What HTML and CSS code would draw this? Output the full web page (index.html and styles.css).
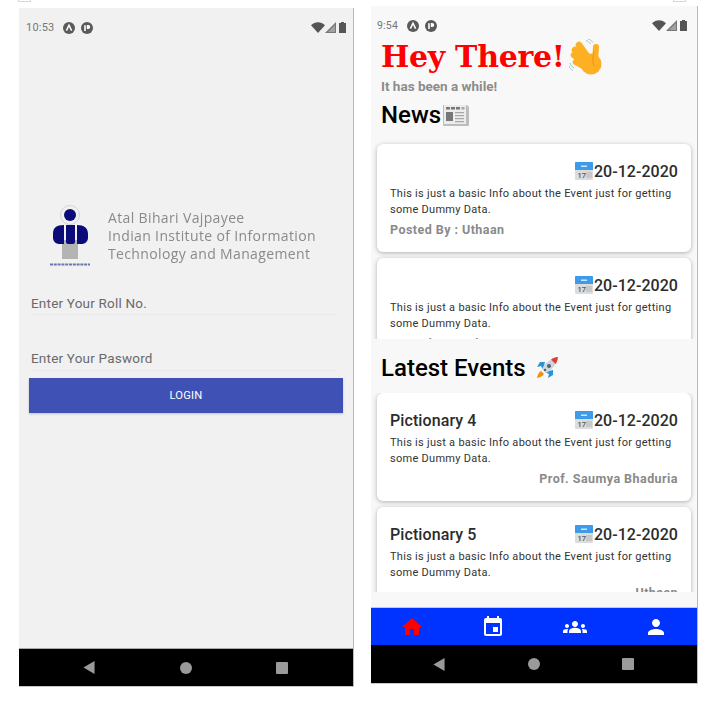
FILE: index.html
```html
<!DOCTYPE html>
<html lang="en">
<head>
<meta charset="utf-8">
<title>Uthaan</title>
<link rel="stylesheet" href="styles.css">
</head>
<body>
<svg class="defs" width="0" height="0" aria-hidden="true">
  <symbol id="i-a" viewBox="0 0 12 12"><circle cx="6" cy="6" r="6" fill="#5a5a5a"/><path d="M3.400 8.600 6 3.200l2.600 5.400" fill="none" stroke="#fff" stroke-width="1.500"/></symbol>
  <symbol id="i-p" viewBox="0 0 12 12"><circle cx="6" cy="6" r="6" fill="#5a5a5a"/><path d="M3.200 3.200h1.600v5.800H3.200zM5.800 3h1.400a2 2 0 0 1 0 4H5.800z" fill="#fff"/></symbol>
  <symbol id="i-wifi" viewBox="0 0 14 11"><path d="M0 3.200C4-.9 10-.9 14 3.200L7 11z" fill="#555"/></symbol>
  <symbol id="i-signal" viewBox="0 0 11 11"><path d="M11 0v11H0z" fill="#777"/><path d="M10 3v7H3z" fill="#f4f4f4" opacity=".35"/></symbol>
  <symbol id="i-batt" viewBox="0 0 7 11"><path d="M2 0h3v1h2v10H0V1h2z" fill="#555"/></symbol>
  <symbol id="i-cal" viewBox="0 0 18 18"><rect width="18" height="18" rx="1" fill="#dcdcdc"/><path d="M0 1a1 1 0 0 1 1-1h16a1 1 0 0 1 1 1v7H0z" fill="#3d9be9"/><path d="M6 3.500h6v1.500H6z" fill="#cfe6fa"/><path d="M11 10h6v6h-6z" fill="#c8c8c8"/><text x="2.500" y="16" class="cal-num">17</text></symbol>
  <symbol id="i-news" viewBox="0 0 26 22"><path d="M0 1h24l2 2v18a1 1 0 0 1-1 1H1a1 1 0 0 1-1-1z" fill="#bdbdbd"/><path d="M1 1h22v19H1z" fill="#ececec"/><path d="M3 3h4v2.500H3zM8 3h4v2.500H8zM13 3h4v2.500h-4zM3 8h7v9H3z" fill="#777"/><path d="M12 8h9v1.200h-9zM12 11h9v1.200h-9zM12 14h9v1.200h-9zM12 17h9v1.200h-9zM18.500 3h3v2.500h-3z" fill="#a8a8a8"/></symbol>
  <symbol id="i-wave" viewBox="0 0 36 36">
    <g fill="none" stroke="#fdb022" stroke-linecap="round">
      <path stroke-width="6.500" d="M20 20 10 6"/>
      <path stroke-width="6.500" d="M18 22 6 11"/>
      <path stroke-width="6.500" d="M18 25 5 16"/>
      <path stroke-width="6.500" d="M18 29 7 23"/>
      <path stroke-width="6" d="M26 22 27 8"/>
    </g>
    <circle cx="22" cy="25" r="10.500" fill="#fdb022"/>
    <path d="M25 12c-1 6-2 10 0 15" fill="none" stroke="#e08e0b" stroke-width=".8"/>
    <path d="M17 1.500c2 .5 3.500 1.800 4.500 3.500M19 0c2 .5 3.500 1.500 5 3.500M1 24c.5 2 2 4 4 5M0 27c.5 2 2 3.500 4 4.500" fill="none" stroke="#a9bfcc" stroke-width="1"/>
  </symbol>
  <symbol id="i-rocket" viewBox="0 0 24 24"><path d="M8 14 6 10l-4 1 3-5h5zM10 16l4 2-1 4 5-3v-5z" fill="#2a93d5"/><path d="M7 13C10 7 16 2 23 1c-1 7-6 13-12 16z" fill="#ccd6dd"/><path d="M16 3.500C18 2 20.500 1.300 23 1c-.3 2.500-1 5-2.500 7z" fill="#e53935"/><circle cx="14" cy="10" r="2" fill="#55606a"/><circle cx="10" cy="14" r="1.200" fill="#55606a"/><path d="M6 15c-2 1-3.500 4-4 7 3-.5 6-2 7-4z" fill="#f4900c"/></symbol>
  <symbol id="i-home" viewBox="0 0 24 24"><path d="M10 20v-6h4v6h5v-8h3L12 3 2 12h3v8z" fill="#f00"/></symbol>
  <symbol id="i-event" viewBox="0 0 24 24"><path fill="#fff" d="M17 12h-5v5h5v-5zM16 1v2H8V1H6v2H5c-1.110 0-1.990.9-1.990 2L3 19c0 1.100.89 2 2 2h14c1.100 0 2-.9 2-2V5c0-1.100-.9-2-2-2h-1V1h-2zm3 18H5V8h14v11z"/></symbol>
  <symbol id="i-groups" viewBox="0 0 24 24"><path fill="#fff" d="M12 12.750c1.630 0 3.070.39 4.240.9 1.080.48 1.760 1.560 1.760 2.730V18H6v-1.610c0-1.180.68-2.260 1.760-2.730 1.170-.52 2.610-.91 4.240-.91zM4 13c1.100 0 2-.9 2-2s-.9-2-2-2-2 .9-2 2 .9 2 2 2zm1.130 1.100c-.37-.06-.74-.1-1.130-.1-.99 0-1.930.21-2.780.58C.48 14.900 0 15.620 0 16.430V18h4.500v-1.610c0-.83.23-1.610.63-2.290zM20 13c1.100 0 2-.9 2-2s-.9-2-2-2-2 .9-2 2 .9 2 2 2zm4 3.430c0-.81-.48-1.530-1.220-1.850-.85-.37-1.790-.58-2.780-.58-.39 0-.76.04-1.130.1.4.68.63 1.460.63 2.290V18H24v-1.570zM12 6c1.660 0 3 1.340 3 3s-1.340 3-3 3-3-1.340-3-3 1.340-3 3-3z"/></symbol>
  <symbol id="i-person" viewBox="0 0 24 24"><path fill="#fff" d="M12 12c2.210 0 4-1.790 4-4s-1.790-4-4-4-4 1.790-4 4 1.790 4 4 4zm0 2c-2.670 0-8 1.340-8 4v2h16v-2c0-2.660-5.330-4-8-4z"/></symbol>
  <symbol id="i-back" viewBox="0 0 12 14"><path d="M12 0v14L0 7z" fill="#9a9a9a"/></symbol>
</svg>

<div class="mark mark-left"></div>
<div class="mark mark-right"></div>

<main class="screens">
  <section class="phone phone-login">
    <div class="status status-login">
      <span class="time">10:53</span>
      <svg class="dot"><use href="#i-a"/></svg>
      <svg class="dot"><use href="#i-p"/></svg>
      <span class="spacer"></span>
      <svg class="s-wifi"><use href="#i-wifi"/></svg>
      <svg class="s-signal"><use href="#i-signal"/></svg>
      <svg class="s-batt"><use href="#i-batt"/></svg>
    </div>
    <div class="login-body">
      <div class="logo">
        <svg class="crest" viewBox="0 0 44 66" aria-hidden="true">
          <circle cx="20" cy="11" r="9.500" fill="none" stroke="#d2d2d8" stroke-width="1"/>
          <circle cx="20" cy="11" r="6" fill="#0b0b7a"/>
          <rect x="12" y="36" width="16" height="19" fill="#b4b4b4"/>
          <path d="M3 30c0-6 3-9 11-9v19H9c-3 0-6-3-6-6zM16 21h9v17a2 2 0 0 1-2 2h-5a2 2 0 0 1-2-2zM27 21c7 0 11 3 11 9v4c0 3-3 6-6 6h-5z" fill="#0b0b7a"/>
          <path d="M0 60.500h40" stroke="#6a78b0" stroke-width="2" stroke-dasharray="3 .8"/>
        </svg>
        <div class="logo-text">
          <div>Atal Bihari Vajpayee</div>
          <div>Indian Institute of Information</div>
          <div>Technology and Management</div>
        </div>
      </div>
      <div class="field field-first">Enter Your Roll No.</div>
      <div class="field field-second">Enter Your Pasword</div>
      <button class="login-btn" type="button">LOGIN</button>
    </div>
    <div class="navbar navbar-login">
      <svg class="nav-back"><use href="#i-back"/></svg>
      <span class="nav-home"></span>
      <span class="nav-square"></span>
    </div>
  </section>

  <section class="phone phone-home">
    <div class="status status-home">
      <span class="time">9:54</span>
      <svg class="dot"><use href="#i-a"/></svg>
      <svg class="dot"><use href="#i-p"/></svg>
      <span class="spacer"></span>
      <svg class="s-wifi"><use href="#i-wifi"/></svg>
      <svg class="s-signal"><use href="#i-signal"/></svg>
      <svg class="s-batt"><use href="#i-batt"/></svg>
    </div>
    <h1 class="hey">Hey There!<svg class="e-wave"><use href="#i-wave"/></svg></h1>
    <p class="sub">It has been a while!</p>
    <h2 class="sec sec-news">News<svg class="e-news"><use href="#i-news"/></svg></h2>
    <div class="list list-news">
      <article class="card">
        <div class="card-head card-head-end"><span class="date"><svg class="e-cal"><use href="#i-cal"/></svg>20-12-2020</span></div>
        <p class="info">This is just a basic Info about the Event just for getting some Dummy Data.</p>
        <p class="by">Posted By : Uthaan</p>
      </article>
      <article class="card">
        <div class="card-head card-head-end"><span class="date"><svg class="e-cal"><use href="#i-cal"/></svg>20-12-2020</span></div>
        <p class="info">This is just a basic Info about the Event just for getting some Dummy Data.</p>
        <p class="by">Posted By : Uthaan</p>
      </article>
    </div>
    <h2 class="sec sec-events">Latest Events <svg class="e-rocket"><use href="#i-rocket"/></svg></h2>
    <div class="list list-events">
      <article class="card">
        <div class="card-head"><span class="title">Pictionary 4</span><span class="date"><svg class="e-cal"><use href="#i-cal"/></svg>20-12-2020</span></div>
        <p class="info">This is just a basic Info about the Event just for getting some Dummy Data.</p>
        <p class="by by-right">Prof. Saumya Bhaduria</p>
      </article>
      <article class="card">
        <div class="card-head"><span class="title">Pictionary 5</span><span class="date"><svg class="e-cal"><use href="#i-cal"/></svg>20-12-2020</span></div>
        <p class="info">This is just a basic Info about the Event just for getting some Dummy Data.</p>
        <p class="by by-right">Uthaan</p>
      </article>
    </div>
    <nav class="tabs">
      <svg class="tab"><use href="#i-home"/></svg>
      <svg class="tab"><use href="#i-event"/></svg>
      <svg class="tab"><use href="#i-groups"/></svg>
      <svg class="tab"><use href="#i-person"/></svg>
    </nav>
    <div class="navbar navbar-home">
      <svg class="nav-back"><use href="#i-back"/></svg>
      <span class="nav-home"></span>
      <span class="nav-square"></span>
    </div>
  </section>
</main>
</body>
</html>
```

FILE: styles.css
```css
* { box-sizing: border-box; }
html, body { margin: 0; padding: 0; background: #fff; }
body { font-family: Roboto, sans-serif; width: 724px; height: 701px; overflow: hidden; position: relative; }
.defs { position: absolute; }
.cal-num { font: 500 7.500px Roboto, sans-serif; fill: #555; }

.mark { position: absolute; top: 0; width: 13px; height: 2px; border: 1px solid #d8d8d8; border-top: 0; }
.mark-left { left: 18px; }
.mark-right { left: 673px; }

.screens { display: flex; align-items: flex-start; gap: 17px; padding-left: 19px; }
.phone { display: flex; flex-direction: column; border-right: 1px solid #b9b9b9; border-bottom: 1px solid #c9c9c9; }
.phone-login { width: 335px; height: 679px; margin-top: 8px; background: #f1f1f1; }
.phone-home { width: 327px; height: 678px; margin-top: 6px; background: #f8f8f8; }

.status { display: flex; align-items: center; flex: none; color: #777; font-size: 11px; }
.status-login { height: 38px; padding: 1px 7px 0 7px; }
.status-home { height: 29px; padding: 10px 10px 0 6px; font-size: 10.500px; }
.time { margin-right: 9px; letter-spacing: .2px; }
.dot { width: 12px; height: 12px; margin-right: 6px; }
.spacer { flex: 1; }
.s-wifi { width: 14px; height: 11px; }
.s-signal { width: 11px; height: 11px; margin: 0 3px 0 0; }
.s-batt { width: 7px; height: 11px; }

.login-body { flex: 1; display: flex; flex-direction: column; padding: 159px 10px 0 10px; }
.logo { display: flex; align-items: flex-start; height: 66px; padding-left: 21px; }
.crest { width: 44px; height: 66px; flex: none; margin-top: -1px; filter: blur(.4px); }
.logo-text { margin: 4px 0 0 14px; font-family: "Open Sans", sans-serif; font-size: 14px; line-height: 18px; color: #8a8a8a; letter-spacing: .36px; white-space: nowrap; filter: blur(.25px); }
.field { margin: 0 8px 0 2px; font-size: 13.500px; line-height: 18px; color: #6a6a6a; letter-spacing: .2px; border-bottom: 1px solid #e9e9e9; padding-bottom: 3px; }
.field-first { margin-top: 23px; padding-bottom: 2px; }
.field-second { margin-top: 34px; }
.login-btn { display: block; width: 314px; height: 35px; margin-top: 7px; border: 0; padding: 0; background: #3f51b5; color: #fff; font: 400 11.200px Roboto, sans-serif; letter-spacing: .2px; box-shadow: 0 1px 2px rgba(0,0,0,.2); }

.navbar { flex: none; display: flex; align-items: center; background: #000; }
.navbar-login { height: 38px; padding-left: 64px; border-top: 1px solid #aaa; }
.navbar-home { height: 38px; padding-left: 62px; }
.nav-back { width: 12px; height: 13px; }
.nav-home { width: 12px; height: 12px; border-radius: 50%; background: #9a9a9a; margin-left: 85px; }
.nav-square { width: 12px; height: 12px; border-radius: 1px; background: #9a9a9a; margin-left: 84px; }
.navbar-home .nav-home { margin-left: 83px; }
.navbar-home .nav-square { margin-left: 82px; }

.hey { margin: 2px 0 0; padding-left: 10px; height: 39px; display: flex; align-items: center; font: 700 30px/39px "DejaVu Serif", serif; color: #f00; letter-spacing: -.3px; white-space: nowrap; flex: none; }
.e-wave { width: 36px; height: 36px; margin: 0 0 0 4px; }
.sub { margin: 2px 0 0; padding-left: 10px; font-size: 13.500px; font-weight: 700; line-height: 16px; color: #8c8c8c; flex: none; }
.sec { margin: 0; padding-left: 10px; font-weight: 500; color: #000; flex: none; display: flex; align-items: center; white-space: nowrap; }
.sec-news { margin-top: 7px; height: 28px; font-size: 24px; line-height: 28px; }
.sec-events { height: 54px; font-size: 24px; line-height: 28px; padding-top: 3px; white-space: pre; }
.e-news { width: 26px; height: 22px; margin-left: 2px; }
.e-rocket { width: 24px; height: 24px; margin-left: 3px; }

.list { overflow: hidden; flex: none; padding: 0 6px; display: flex; flex-direction: column; gap: 6px; }
.list-news { height: 210px; padding-top: 15px; }
.list-events { height: 199px; }
.card { flex: none; height: 108px; background: #fff; border-radius: 6px; padding: 17px 13px 0; box-shadow: 0 1px 4px rgba(0,0,0,.3); }
.card-head { display: flex; align-items: center; justify-content: space-between; height: 20px; }
.card-head-end { justify-content: flex-end; }
.date { display: flex; align-items: center; font-size: 16px; font-weight: 500; color: #2c2c2c; letter-spacing: .05px; }
.e-cal { width: 18px; height: 18px; margin-right: 1px; }
.title { font-size: 16px; font-weight: 500; color: #2c2c2c; letter-spacing: .1px; }
.info { margin: 5px 0 0; font-size: 11px; line-height: 16px; color: #333; letter-spacing: .28px; }
.by { margin: 4px 0 0; font-size: 12.500px; line-height: 16px; font-weight: 700; color: #8a8a8a; letter-spacing: .45px; }
.by-right { text-align: right; }

.tabs { flex: none; height: 38px; margin-top: 15px; background: #0033ff; display: flex; justify-content: space-around; align-items: center; border-top: 1px solid #c9c9c9; }
.tab { width: 24px; height: 24px; }
```
